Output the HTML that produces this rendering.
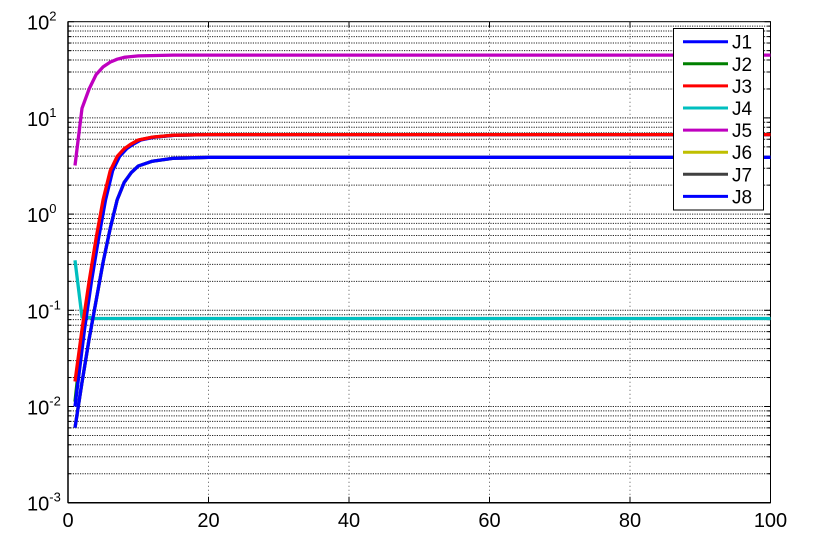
<!DOCTYPE html>
<html><head><meta charset="utf-8"><style>
html,body{margin:0;padding:0;background:#fff;width:830px;height:553px;overflow:hidden}
svg{display:block}
text{font-family:"Liberation Sans",sans-serif;fill:#000}
</style></head><body>
<svg id="s" width="830" height="553" xmlns="http://www.w3.org/2000/svg">
<rect x="68" y="21.7" width="702.5" height="481" fill="#fff" stroke="#000" stroke-width="1"/>
<g id="grid"></g>
<g id="curves" fill="none" stroke-width="3.3" stroke-linejoin="round"></g>
<g id="labels"></g>
<g id="legend"></g>
</svg>
<script>
var NS="http://www.w3.org/2000/svg";
function el(p,n,a,t){var e=document.createElementNS(NS,n);for(var k in a)e.setAttribute(k,a[k]);if(t!==undefined)e.textContent=t;document.getElementById(p).appendChild(e);return e;}
var X0=68,XS=7.025,Y2=21.7,D=96.2;
function X(t){return X0+t*XS;}
function Y(l){return Y2+(2-l)*D;}
for(var d=-3;d<2;d++){for(var m=2;m<=9;m++){var y=Y(d+Math.log10(m));
el("grid","line",{x1:68,x2:770.5,y1:y,y2:y,stroke:"#222","stroke-width":1,"stroke-dasharray":"1.2,1.2"});}
if(d>-3){var y=Y(d);el("grid","line",{x1:68,x2:770.5,y1:y,y2:y,stroke:"#222","stroke-width":1,"stroke-dasharray":"1.2,1.2"});}}
for(var t=20;t<100;t+=20){el("grid","line",{x1:X(t),x2:X(t),y1:21.7,y2:502.7,stroke:"#444","stroke-width":0.9,"stroke-dasharray":"1,3"});}
for(var d=-3;d<=2;d++){for(var m=1;m<=9;m++){if(d==2&&m>1)break;var y=Y(d+Math.log10(m));var len=m==1?6:3;
el("grid","line",{x1:68,x2:68+len,y1:y,y2:y,stroke:"#000","stroke-width":1});
el("grid","line",{x1:770.5,x2:770.5-len,y1:y,y2:y,stroke:"#000","stroke-width":1});}}
for(var t=0;t<=100;t+=20){el("grid","line",{x1:X(t),x2:X(t),y1:502.7,y2:496.7,stroke:"#000"});el("grid","line",{x1:X(t),x2:X(t),y1:21.7,y2:27.7,stroke:"#000"});}
el("grid","line",{x1:68,x2:770.5,y1:502.7,y2:502.7,stroke:"#000","stroke-width":1.5});
el("grid","line",{x1:68,x2:68,y1:21.7,y2:502.7,stroke:"#000","stroke-width":1.5});
for(var d=-3;d<=2;d++){var y=Y(d);var g=el("labels","text",{x:27,y:y+8,"font-size":20});
g.innerHTML='10<tspan dy="-9" font-size="13">'+d+'</tspan>';}
for(var t=0;t<=100;t+=20){el("labels","text",{x:X(t),y:527,"font-size":20,"text-anchor":"middle"},String(t));}
function curve(pts,col){var s="";for(var i=0;i<pts.length;i++){s+=(i?"L":"M")+X(pts[i][0]).toFixed(1)+","+Y(pts[i][1]).toFixed(1);}
el("curves","path",{d:s,stroke:col});}
var up=[[1,-1.74],[2,-1.2],[3,-0.7],[4,-0.25],[5,0.15],[6,0.45],[7,0.6],[8,0.68],[9,0.73],[10,0.77],[12,0.8],[15,0.82],[20,0.826],[100,0.826]];
var lo=[[1,-2.22],[2,-1.75],[3,-1.3],[4,-0.9],[5,-0.5],[6,-0.15],[7,0.15],[8,0.33],[9,0.43],[10,0.5],[12,0.55],[15,0.58],[20,0.59],[100,0.59]];
function shift(p,dx,l0){return p.map(function(q,i){return [i==0?q[0]:(q[0]==100?100:q[0]+dx),i==0&&l0!==undefined?l0:q[1]];});}
curve([[1,-0.48],[2,-1.07],[3,-1.075],[4,-1.085],[100,-1.085]],"#00bfbf");
curve([[1,0.505],[2,1.1],[3,1.3],[4,1.45],[5,1.53],[6,1.58],[7,1.61],[8,1.63],[10,1.645],[15,1.653],[100,1.653]],"#bf00bf");
curve(lo,"#404040");curve(lo,"#bfbf00");
curve(shift(up,0.1,-1.95),"#008000");
curve(shift(up,0.35,-2.0),"#0000ff");
curve(up,"#ff0000");
curve(lo,"#0000ff");
el("legend","rect",{x:673.5,y:28.5,width:90,height:181.5,fill:"#fff",stroke:"#000","stroke-width":1});
var L=[["J1","#0000ff"],["J2","#008000"],["J3","#ff0000"],["J4","#00bfbf"],["J5","#bf00bf"],["J6","#bfbf00"],["J7","#404040"],["J8","#0000ff"]];
for(var i=0;i<8;i++){var y=41.7+i*22.1;
el("legend","line",{x1:683,x2:728,y1:y,y2:y,stroke:L[i][1],"stroke-width":3});
el("legend","text",{x:732,y:y+7,"font-size":19},L[i][0]);}
</script>
</body></html>
